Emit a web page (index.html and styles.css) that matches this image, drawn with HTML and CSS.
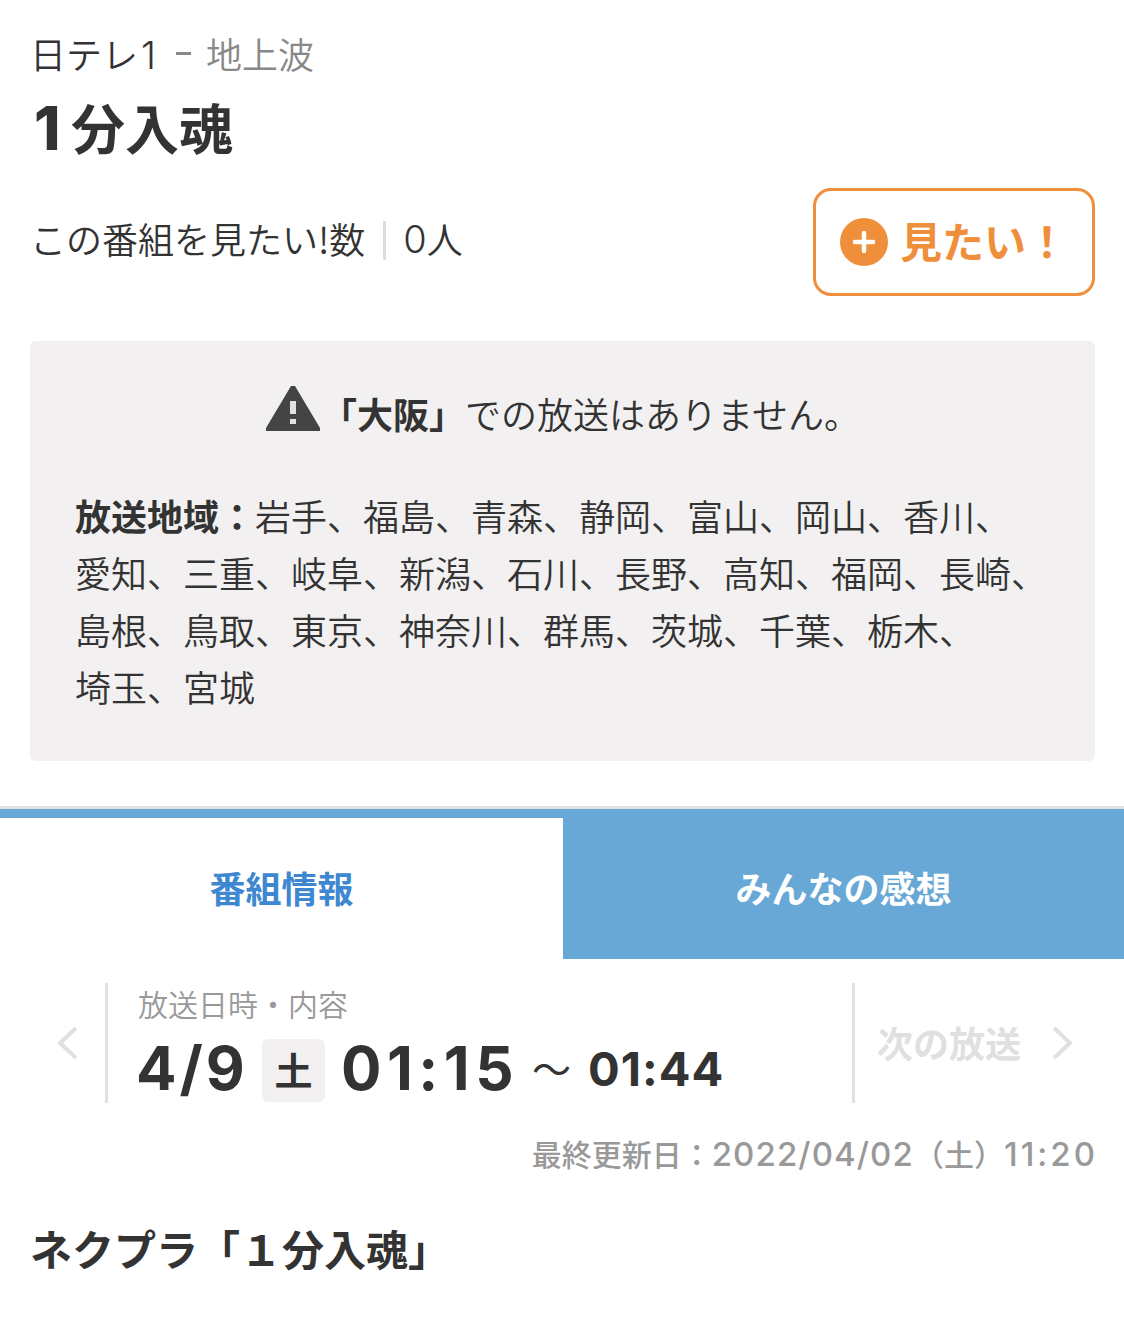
FILE: index.html
```html
<!DOCTYPE html>
<html lang="ja">
<head>
<meta charset="utf-8">
<title>1分入魂</title>
<link rel="stylesheet" href="styles.css">
</head>
<body>
<header class="program">
  <p class="station"><span>日テレ<span class="latin channel">1</span></span><span class="wave"><i class="dash"></i>地上波</span></p>
  <h1 class="title"><span class="one">1</span>分入魂</h1>
  <div class="want">
    <p class="count"><span class="label">この番組を見たい!数</span><span class="people"><span class="latin">0</span>人</span></p>
    <button class="want-button"><svg width="48" height="48" viewBox="0 0 48 48"><circle cx="24" cy="24" r="24" fill="#ef8f3b"/><path d="M24 15v18M15 24h18" stroke="#fff" stroke-width="4.5" stroke-linecap="round"/></svg><span>見たい！</span></button>
  </div>
  <section class="area">
    <p class="notice"><svg width="54" height="45" viewBox="0 0 54 45"><path d="M25 0h4l25 42v3H0v-3z" fill="#444"/><path d="M27 15v13M27 33v5" stroke="#e3e2e2" stroke-width="6"/></svg><b>「大阪」</b><span>での放送はありません。</span></p>
    <p class="regions"><b>放送地域：</b>岩手、福島、青森、静岡、富山、岡山、香川、<br>愛知、三重、岐阜、新潟、石川、長野、高知、福岡、長崎、<br>島根、鳥取、東京、神奈川、群馬、茨城、千葉、栃木、<br>埼玉、宮城</p>
  </section>
</header>
<nav class="tabs"><a class="tab active">番組情報</a><a class="tab">みんなの感想</a></nav>
<section class="schedule">
  <div class="prev"><svg width="24" height="36" viewBox="0 0 24 36"><path d="M20 3L4 18l16 15" /></svg></div>
  <div class="airing">
    <p class="caption">放送日時・内容</p>
    <p class="date"><span class="day">4/9</span><span class="weekday">土</span><span class="start">01:15</span><span class="tilde">～</span><span class="end">01:44</span></p>
  </div>
  <div class="next"><span>次の放送</span><svg width="24" height="36" viewBox="0 0 24 36"><path d="M4 3l16 15L4 33" /></svg></div>
</section>
<p class="updated">最終更新日：<span class="stamp">2022/04/02</span>（土）<span class="stamp time">11:20</span></p>
<h2 class="subtitle">ネクプラ「１分入魂」</h2>
</body>
</html>
```
FILE: styles.css
```css
* { box-sizing: border-box; }
body { margin: 0; height: 1328px; background: #fff; color: #333; font: 350 36px/1.5 "Noto Sans CJK JP", sans-serif; overflow: hidden; }
p, h1, h2 { margin: 0; white-space: nowrap; }
b { font-weight: 700; }
svg { flex: none; }
.latin { font-family: Inter, sans-serif; font-weight: 300; font-size: 38px; line-height: 1; }
.channel { margin: 0 2px 0 3px; }
.program { padding: 26px 29px 0 30px; }
.station { display: flex; height: 54px; line-height: 54px; }
.wave { display: flex; align-items: center; color: #888; }
.dash { width: 15px; height: 3px; margin: 0 15px 0 18px; background: #888; }
.title { height: 94px; font-size: 54px; line-height: 94px; }
.one { display: inline-block; width: 41px; padding-left: 4px; font: 800 60px/1 Inter, sans-serif; }
.want { display: flex; justify-content: space-between; margin-top: 14px; }
.count { display: flex; align-items: center; height: 104px; }
.label { margin-top: -5px; }
.people { display: flex; align-items: center; height: 39px; line-height: 34px; margin-left: 18px; padding: 0 0 5px 17px; border-left: 3px solid #ddd; }
.people .latin { padding-top: 3px; }
.want-button { display: flex; align-items: center; gap: 12px; width: 282px; height: 108px; padding: 0 0 0 24px; border: 3px solid #ef8f3b; border-radius: 18px; background: #fff; color: #ef8f3b; font: 700 42px/1 "Noto Sans CJK JP", sans-serif; }
.want-button span { padding-bottom: 5px; }
.area { height: 420px; margin-top: 45px; padding: 44px 44px 0 45px; border-radius: 6px; background: #f2f0f1; }
.notice { display: flex; justify-content: center; line-height: 57px; }
.notice svg { margin: 1px 1px 0 0; }
.regions { margin-top: 45px; line-height: 57px; }
.tabs { display: flex; height: 153px; margin-top: 45px; border-top: 3px solid #dfe2e5; background: #68a8d6; }
.tab { flex: 1; padding-top: 9px; text-align: center; font-weight: 700; line-height: 138px; color: #fff; }
.active { flex: 0 0 563px; border-top: 9px solid #68a8d6; padding: 0; background: #fff; color: #3e88d1; }
.schedule { display: flex; height: 120px; margin-top: 24px; }
.schedule path { fill: none; stroke: #e0e0e0; stroke-width: 4; }
.prev { width: 105px; display: flex; align-items: center; padding-left: 56px; }
.airing { width: 750px; padding-left: 30px; border: solid #e2e1e1; border-width: 0 3px; }
.caption { height: 44px; font-size: 30px; line-height: 40px; color: #999; }
.date { display: flex; align-items: center; height: 86px; font-weight: 700; }
.day, .start { height: 86px; font: 700 60px/82px Inter, sans-serif; }
.day { width: 108px; margin-left: -2px; margin-right: 2px; letter-spacing: 3px; }
.start { width: 174px; letter-spacing: 5.5px; }
.weekday { width: 63px; height: 63px; margin: 0 16px; border-radius: 6px; background: #f2f0f1; text-align: center; font-size: 38px; line-height: 60px; }
.tilde { font-weight: 400; margin: -6px 17px 0 17px; font-size: 39px; }
.end { height: 86px; font: 700 47px/84px Inter, sans-serif; letter-spacing: 1px; }
.next { display: flex; align-items: center; gap: 29px; padding-left: 22px; color: #e0e0e0; font-weight: 700; }
.next span { margin-top: -3px; }
.updated { height: 44px; margin: 28px 29px 0; text-align: right; font-weight: 500; font-size: 30px; line-height: 44px; color: #999; }
.stamp { font-family: Inter, sans-serif; font-size: 33px; line-height: 1; letter-spacing: 1.1px; }
.time { letter-spacing: 3px; margin-right: -3px; }
.subtitle { margin: 42px 30px 0; font-size: 42px; line-height: 62px; }
```
